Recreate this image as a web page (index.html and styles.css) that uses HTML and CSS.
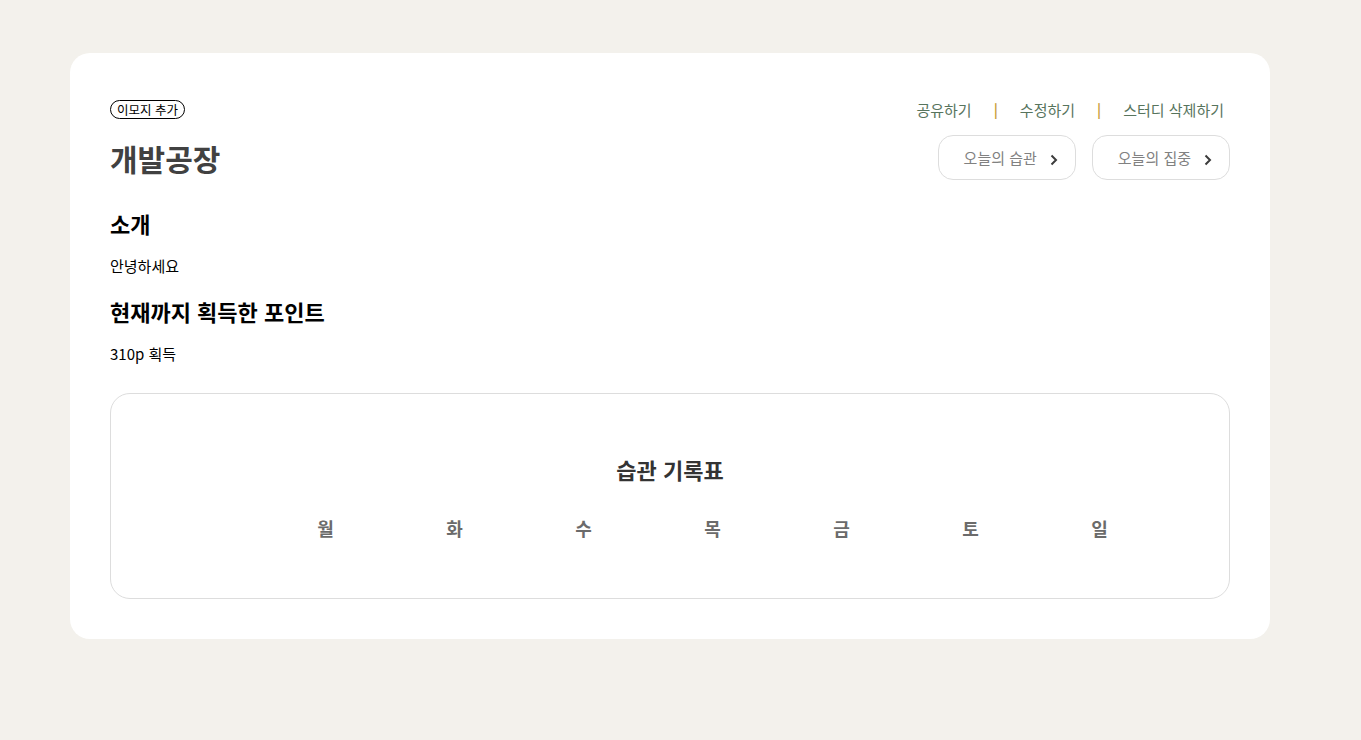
FILE: index.html
```html
<!DOCTYPE html>
<html lang="ko">
<head>
<meta charset="utf-8">
<title>개발공장</title>
<link rel="stylesheet" href="styles.css">
</head>
<body>
<main class="card">
  <div class="top-row">
    <button class="emoji-btn">이모지 추가</button>
    <nav class="links">
      <a class="link">공유하기</a>
      <span class="sep">|</span>
      <a class="link">수정하기</a>
      <span class="sep">|</span>
      <a class="link">스터디 삭제하기</a>
    </nav>
  </div>
  <div class="title-row">
    <h1 class="title">개발공장</h1>
    <div class="actions">
      <button class="go-btn">오늘의 습관
        <svg class="chev" width="10" height="14" viewBox="0 0 10 14"><path d="M2.5 2.5 L7 7 L2.5 11.5" fill="none" stroke="#3c3c3c" stroke-width="2"/></svg>
      </button>
      <button class="go-btn">오늘의 집중
        <svg class="chev" width="10" height="14" viewBox="0 0 10 14"><path d="M2.5 2.5 L7 7 L2.5 11.5" fill="none" stroke="#3c3c3c" stroke-width="2"/></svg>
      </button>
    </div>
  </div>
  <section class="info">
    <h2 class="sub">소개</h2>
    <p class="text">안녕하세요</p>
    <h2 class="sub">현재까지 획득한 포인트</h2>
    <p class="text">310p 획득</p>
  </section>
  <section class="habit-box">
    <h3 class="habit-title">습관 기록표</h3>
    <div class="days">
      <span></span>
      <span class="day">월</span>
      <span class="day">화</span>
      <span class="day">수</span>
      <span class="day">목</span>
      <span class="day">금</span>
      <span class="day">토</span>
      <span class="day">일</span>
    </div>
  </section>
</main>
</body>
</html>
```
FILE: styles.css
```css
* { box-sizing: border-box; }
html, body { margin: 0; padding: 0; }
body {
  background: #f3f1ec;
  font-family: "Noto Sans CJK KR", "Noto Sans", sans-serif;
  color: #000;
  padding: 53px 91px 0 70px;
}
.card {
  background: #fff;
  border-radius: 20px;
  width: 1200px;
  padding: 40px 40px 40px;
}
.top-row {
  display: flex;
  justify-content: space-between;
  align-items: center;
  margin-top: 6px;
  height: 20px;
}
.emoji-btn {
  font-family: inherit;
  font-size: 12.5px;
  line-height: 17px;
  height: 19px;
  padding: 0 6px;
  border: 1px solid #000;
  border-radius: 10px;
  background: #fff;
  color: #000;
}
.links {
  display: flex;
  align-items: center;
  gap: 22px;
  padding-right: 6px;
  font-size: 15px;
}
.link { color: #57745d; }
.sep { color: #c9a03e; font-size: 14px; font-weight: 700; }
.title-row {
  display: flex;
  justify-content: space-between;
  align-items: center;
  margin-top: 16px;
}
.title {
  margin: 0;
  font-size: 30px;
  font-weight: 700;
  color: #414141;
  line-height: 40px;
}
.actions { display: flex; gap: 16px; }
.go-btn {
  display: flex;
  align-items: center;
  gap: 12px;
  height: 45px;
  padding: 0 16px 0 25px;
  border: 1px solid #dddddd;
  border-radius: 15px;
  background: #fff;
  font-family: inherit;
  font-size: 15px;
  color: #818181;
}
.chev { margin-top: 4px; }
.info { margin-top: 28px; }
.sub {
  margin: 0;
  font-size: 22px;
  font-weight: 700;
  line-height: 30px;
  color: #000;
}
.text {
  margin: 18px 0 20px;
  font-size: 15px;
  line-height: 20px;
}
.habit-box {
  margin-top: 29px;
  border: 1px solid #dddddd;
  border-radius: 20px;
  height: 206px;
  padding-top: 60px;
}
.habit-title {
  margin: 0;
  text-align: center;
  font-size: 22px;
  font-weight: 700;
  line-height: 30px;
  color: #333;
}
.days {
  display: grid;
  grid-template-columns: 1fr repeat(7, 129px);
  padding-right: 65px;
  margin-top: 32px;
}
.day {
  text-align: center;
  font-size: 18px;
  font-weight: 700;
  color: #6b6b6b;
  line-height: 24px;
}
```
